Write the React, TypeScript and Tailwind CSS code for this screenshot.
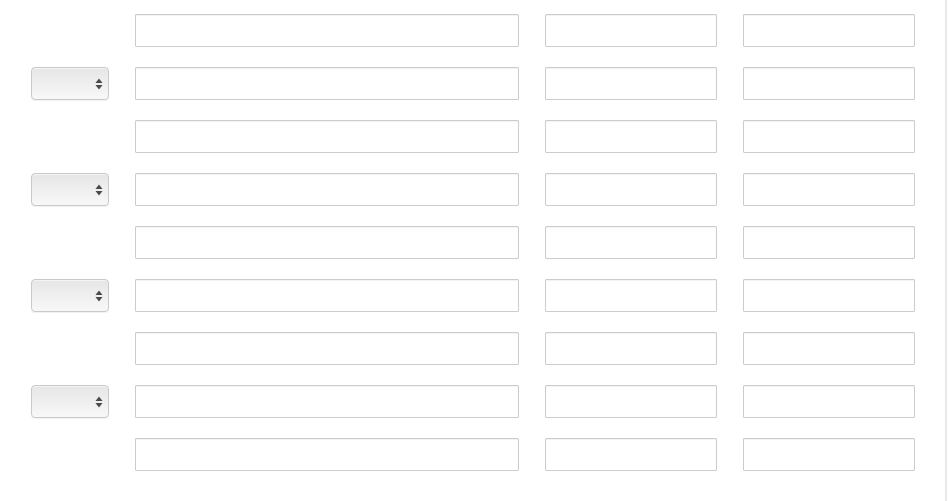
import React from "react";

const rows = [false, true, false, true, false, true, false, true, false];

function Stepper() {
  return (
    <div className="flex h-[33px] w-[78px] items-center justify-end rounded-[4px] border border-[#c9c9c9] bg-gradient-to-b from-[#e6e6e6] to-[#f8f8f8] pr-[5px] shadow-[inset_0_1px_0_#f4f4f4,0_1px_1px_rgba(0,0,0,0.06)]">
      <svg width="8" height="12" viewBox="0 0 8 12">
        <path d="M4 0.5 L7.5 5 L0.5 5 Z" fill="#4a4a4a" />
        <path d="M4 11.5 L7.5 7 L0.5 7 Z" fill="#4a4a4a" />
      </svg>
    </div>
  );
}

function Field({ w }: { w: string }) {
  return (
    <input
      type="text"
      className={`h-[33px] ${w} rounded-[1px] border border-[#cccccc] bg-white shadow-[inset_0_1px_1px_rgba(0,0,0,0.05)] outline-none`}
    />
  );
}

export default function App() {
  return (
    <div className="h-[501px] w-[947px] border-r-2 border-[#e8e8e8] bg-white font-['Liberation_Sans',sans-serif]">
      <div className="flex flex-col gap-[20px] pl-[31px] pt-[14px]">
        {rows.map((hasSelect, i) => (
          <div key={i} className="flex gap-[26px]">
            <div className="w-[78px]">{hasSelect && <Stepper />}</div>
            <Field w="w-[384px]" />
            <Field w="w-[172px]" />
            <Field w="w-[172px]" />
          </div>
        ))}
      </div>
    </div>
  );
}
